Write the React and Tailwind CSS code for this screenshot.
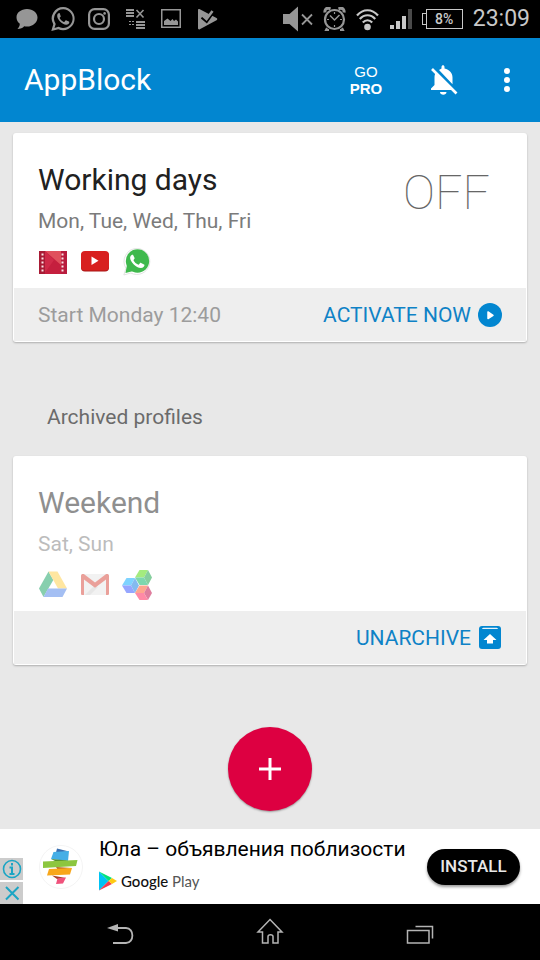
import React from 'react';

const ICON = 'w-[22px] h-[22px] shrink-0';

function StatusBar() {
  return (
    <div className="h-[38px] bg-black flex items-center justify-between pl-4 pr-2.5 text-[#969696]">
      <div className="flex items-center gap-3.5">
        <svg viewBox="0 0 22 22" className={ICON} fill="currentColor" aria-label="Message">
          <path d="M11 1C5 1 .5 4.600.5 9.300c0 2.700 1.300 5 3.300 6.500 0 2-.8 3.700-2.300 5.200 3 0 5.200-1 6.700-2.700.9.200 1.800.3 2.800.3 6 0 10.500-4.300 10.500-9.100S17 1 11 1z" />
        </svg>
        <svg viewBox="0 0 24 24" className="w-[24px] h-[24px] -mx-px shrink-0" fill="currentColor" aria-label="WhatsApp">
          <path fillRule="evenodd" d="M12.300 0A11.500 11.500 0 0 0 2.300 17.300L.3 24l7-1.800A11.600 11.600 0 1 0 12.300 0zm0 2.200a9.400 9.400 0 1 1-4.700 17.600l-4.100 1.100 1.200-4A9.400 9.400 0 0 1 12.300 2.200z" />
          <path d="M8.600 6.100c-.7-.3-2.200.6-2.400 2.300-.4 3.600 5 9.300 9 9.300 1.800 0 3.100-1.200 3.100-2.500 0-.4-.2-.5-.4-.6l-2.500-1.200c-.4-.2-.6-.1-.9.2l-1 1.200c-.2.200-.4.300-.8.100-1.600-.7-3-2-3.900-3.600-.2-.3-.1-.5.1-.7l.9-1.200-1-2.800z" />
        </svg>
        <svg viewBox="0 0 22 22" className={ICON} fill="none" stroke="currentColor" strokeWidth="2.200" aria-label="Instagram">
          <rect x="1.100" y="1.100" width="19.800" height="19.800" rx="5.500" />
          <circle cx="11" cy="11" r="5" />
          <circle cx="16.600" cy="5.400" r="1.300" fill="currentColor" stroke="none" />
        </svg>
        <svg viewBox="0 0 22 22" className={ICON} fill="currentColor" aria-label="Profiles">
          <path d="M2 1h8v2H2zM2 4h8v2H2zM2 7h8v2H2zM12 13h9v2h-9zM12 16h9v2h-9zM12 19h9v2h-9zM5 13h2v1H5zM8 13h2v1H8zM5 16h2v1H5zM8 16h2v1H8z" />
          <path d="M12.500 2l7 7.500M19.500 2l-7 7.500" stroke="currentColor" strokeWidth="1.600" />
        </svg>
        <svg viewBox="0 0 22 22" className={ICON} fill="currentColor" aria-label="Picture">
          <path fillRule="evenodd" d="M1 1h20v19H1zM2.500 2.500v16h17v-16z" />
          <path d="M4 17v-4l3.500-2.500 3 2.500 2-2 1.500 2 2-1.500 2 2v3.500z" />
        </svg>
        <svg viewBox="0 0 22 22" className={ICON} fill="currentColor" aria-label="Play Protect">
          <path d="M2 2c0-1 1-1.300 1.800-.8L20.500 10c1 .6 1 1.600 0 2.200L3.800 21.200C3 21.700 2 21.300 2 20.300z" />
          <path d="M6 9l4.600 3.800L18 2.500" fill="none" stroke="#000" strokeWidth="3.600" />
          <path d="M6.500 7.500l4 3.500L16.500 3" fill="none" stroke="currentColor" strokeWidth="2.600" />
        </svg>
      </div>

      <div className="flex items-center gap-2.5">
        <svg viewBox="0 0 30 26" className="w-[30px] h-[26px]" fill="currentColor" aria-label="Sound off">
          <path d="M0 8h6.500L15 .5v25L6.500 18H0z" />
          <path d="M19 8.500l10 10M29 8.500l-10 10" stroke="currentColor" strokeWidth="1.800" />
        </svg>
        <svg viewBox="0 0 23 24" className="w-[23px] h-[24px]" fill="none" stroke="currentColor" aria-label="Alarm">
          <circle cx="11.500" cy="12.500" r="9.500" strokeWidth="2.200" />
          <path d="M2 5.500C1.500 3 3 1 5.500 1.200L7.500 2M21 5.500C21.500 3 20 1 17.500 1.200L15.500 2" strokeWidth="3" />
          <path d="M4 21l-1 2h3M19 21l1 2h-3" strokeWidth="2" />
          <path d="M7 8.500l4.500 4.500L16.500 8" strokeWidth="1.500" />
          <path d="M11.500 5v2M11.500 18v2M4 12.500h2M17 12.500h2" strokeWidth="1.200" />
        </svg>
        <svg viewBox="0 0 23 24" className="w-[23px] h-[24px] text-[#c8c8c8]" fill="none" stroke="currentColor" strokeWidth="2.200" aria-label="Wi-Fi">
          <path d="M1 8.500C7 1.500 16 1.500 22 8.500M3.800 12c4.500-5 11-5 15.400 0M6.800 15.500c2.800-3 6.600-3 9.400 0" />
          <circle cx="11.500" cy="20" r="3.300" fill="currentColor" stroke="none" />
        </svg>
        <svg viewBox="0 0 23 22" className="w-[23px] h-[22px] text-[#c8c8c8]" fill="currentColor" aria-label="Signal">
          <path d="M1 17h4v4H1zM7 13h4v8H7zM13 8h4v13h-4z" />
          <path d="M19 1h4v20h-4z" fill="#4a4a4a" />
        </svg>
        <div className="flex items-center text-[#c8c8c8]" aria-label="Battery 8%">
          <span className="w-[4px] h-[12px] border border-r-0 border-current" />
          <span className="w-[37px] h-[20px] border border-current text-[14px] leading-[18px] font-medium text-center">8%</span>
        </div>
        <span className="text-[23px] leading-[38px] text-[#c8c8c8]">23:09</span>
      </div>
    </div>
  );
}

function Header() {
  return (
    <header className="h-[84px] bg-[#0286d0] text-white flex items-center pl-6 pr-5">
      <h1 className="flex-1 text-[30px] leading-9">AppBlock</h1>
      <button className="w-[56px] font-['Liberation_Sans',sans-serif] text-[15px] leading-[17px] text-center">
        GO
        <span className="block font-bold">PRO</span>
      </button>
      <button className="ml-8 w-[36px] flex justify-center" aria-label="Mute notifications">
        <svg viewBox="0 0 28 32" className="w-[28px] h-[32px]" fill="currentColor">
          <path d="M6 8.500L21 24.500l2 1.500H1v-1.500L4.500 21v-7.500c0-2 .4-3.600 1.500-5zM9 6l2.500-1.500V3c0-2.500 3-2.500 3 0v1.500c5 1.200 8 4.500 8 9v6.800z" />
          <path d="M10 28h6.500c0 3.600-6.500 3.600-6.500 0z" />
          <path d="M2 5l24.500 24.500" stroke="currentColor" strokeWidth="2.600" />
        </svg>
      </button>
      <button className="ml-8 w-[26px] flex justify-center" aria-label="More options">
        <svg viewBox="0 0 6 26" className="w-[6px] h-[26px]" fill="currentColor">
          <circle cx="3" cy="4" r="3" />
          <circle cx="3" cy="13" r="3" />
          <circle cx="3" cy="22" r="3" />
        </svg>
      </button>
    </header>
  );
}

function MoviesIcon() {
  return (
    <svg viewBox="0 0 30 30" className="w-[30px] h-[30px]" aria-label="Play Movies">
      <path fill="#c51f3e" d="M1 4h28v23H1z" />
      <path fill="#e0505c" d="M7 4h16v14z" />
      <path fill="#d02a48" d="M7 4l9 9L6 27V4z" />
      <path fill="#a81b35" d="M1 4h6v23H1z" />
      <path fill="#b81c3e" d="M23 4h6v23h-6z" />
      <path d="M4.500 6.500v19M24.500 6.500v19" stroke="#fbe3e6" strokeWidth="2" strokeDasharray="2 2" />
    </svg>
  );
}

function YouTubeIcon() {
  return (
    <svg viewBox="0 0 30 30" className="w-[30px] h-[30px]" aria-label="YouTube">
      <rect x="1" y="5" width="28" height="19.500" rx="4" fill="#a81616" />
      <rect x="1" y="4" width="28" height="19.500" rx="4" fill="#d8201f" />
      <path fill="#fff" d="M11.500 9.500v8.500l7-4.200z" />
    </svg>
  );
}

function WhatsAppIcon() {
  return (
    <svg viewBox="0 0 30 30" className="w-[30px] h-[30px]" aria-label="WhatsApp">
      <path fill="#fff" stroke="#dcdcdc" strokeWidth=".8" d="M15.500 1.500A13 13 0 0 0 4 21.300L1.800 28l7-2A13 13 0 1 0 15.500 1.500z" />
      <circle cx="15.500" cy="14" r="11.700" fill="#3fb94d" />
      <path fill="#3fb94d" d="M5 18l-1.500 8 8-2z" />
      <path fill="#fff" d="M11 7.800c-1-.4-2.800 1-2.900 2.800-.3 4 6 10.500 10.800 10.500 2.200 0 3.600-1.500 3.600-3 0-.4-.2-.6-.5-.7l-2.900-1.500c-.4-.2-.7-.1-1 .2l-1.200 1.400c-.2.300-.5.300-.9.100-1.900-.8-3.400-2.300-4.400-4.100-.2-.4-.1-.6.1-.8l1-1.400z" />
    </svg>
  );
}

function DriveIcon() {
  return (
    <svg viewBox="0 0 30 30" className="w-[30px] h-[30px]" aria-label="Google Drive">
      <path fill="#11a05f" d="M10.500 1.500L1 18.500 5.500 27l9.800-17z" />
      <path fill="#ffce44" d="M10.500 1.500h9L29 18.500h-9z" />
      <path fill="#4b80e8" d="M10 18.500h19L24.500 27h-19z" />
    </svg>
  );
}

function GmailIcon() {
  return (
    <svg viewBox="0 0 30 30" className="w-[30px] h-[30px]" aria-label="Gmail">
      <rect x="1" y="4" width="28" height="21" rx="2" fill="#e6e6e6" />
      <path fill="#d0d0d0" d="M5 25l10-10 3 2-8 8z" />
      <path fill="#d74437" d="M1 6c0-2 2-2.500 3.500-1.500L15 12.500l10.500-8C27 3.500 29 4 29 6v17.500c0 1-.6 1.500-1.500 1.500H26V9.500l-11 8.300L4 9.500V25H2.500C1.600 25 1 24.500 1 23.500z" />
    </svg>
  );
}

function CubesIcon() {
  return (
    <svg viewBox="0 0 30 30" className="w-[30px] h-[30px]" aria-label="Cubes">
      <path fill="#4cd800" d="M17.500 0h8.500l-4 7.500h-9z" />
      <path fill="#10a040" d="M26 0l4 7.500-4 7.500-4-7.500z" />
      <path fill="#00b060" d="M13 7.500h9l4 7.500h-8.500z" />
      <path fill="#00a8ff" d="M4.500 8H13l-4 7.500H0z" />
      <path fill="#0a78e0" d="M13 8l4 7.500-4 7.500-4-7.500z" />
      <path fill="#3050ff" d="M0 15.500h9l4 7.500H4.500z" />
      <path fill="#ff5020" d="M17.500 15.500H26L22 23h-9z" />
      <path fill="#c00040" d="M26 15.500l4 7.500-4 7-4-7z" />
      <path fill="#ff1850" d="M13 23h9l4 7h-8.500z" />
    </svg>
  );
}

function PlayCircleIcon() {
  return (
    <svg viewBox="0 0 24 24" className="w-[24px] h-[24px]">
      <circle cx="12" cy="12" r="12" fill="#0286d0" />
      <path d="M10 9v6.500l5-3.200z" fill="#fff" stroke="#fff" strokeWidth="1.500" strokeLinejoin="round" />
    </svg>
  );
}

function UnarchiveIcon() {
  return (
    <svg viewBox="0 0 24 24" className="w-[24px] h-[24px]">
      <rect x="1" y="0" width="22" height="23" rx="3" fill="#0286d0" />
      <path d="M4 3c.5-1.200 1-1.300 2-1.300h12c1 0 1.500.1 2 1.300z" fill="#e6f2fa" />
      <path d="M12 8l6.500 6H15v3.500H9V14H5.500z" fill="#fff" />
    </svg>
  );
}

function ProfileCard({ title, days, icons, archived, state, footer, action, actionIcon }) {
  return (
    <section className="bg-white rounded-[3px] p-px shadow-[0_1px_2px_rgba(0,0,0,0.25)]">
      <div className="flex justify-between pl-6 pr-9 pt-[27px] pb-[11px]">
        <div className={archived ? 'opacity-50' : ''}>
          <h2 className="text-[30px] leading-[38px] text-[#212121]">{title}</h2>
          <p className="mt-2 text-[21px] leading-7 text-[#7b7b7b]">{days}</p>
          <div className="mt-3 flex gap-3">{icons}</div>
        </div>
        {state && <span className="mt-1 text-[48px] leading-[56px] font-thin text-[#666]">{state}</span>}
      </div>
      <div className="h-[53px] bg-[#eee] flex items-center justify-between px-6 text-[21px]">
        <span className="pt-0.5 text-[#9c9c9c]">{footer}</span>
        <button className="flex items-center gap-[7px] text-[#0f82c6]">
          <span className="pt-0.5">{action}</span>
          {actionIcon}
        </button>
      </div>
    </section>
  );
}

function AdBanner() {
  return (
    <div className="h-[75px] bg-white flex items-center pr-5">
      <div className="self-end w-[23px] flex flex-col gap-0.5">
        <button className="h-[22px] bg-[#ccc] flex items-center justify-center" aria-label="Ad info">
          <svg viewBox="0 0 20 20" className="w-[20px] h-[20px]" fill="none" stroke="#1ba5c4">
            <circle cx="10" cy="10" r="8.500" strokeWidth="1.600" />
            <path d="M10 4v2.500M7.500 8.500H10V15M7.500 15h5" strokeWidth="2" />
          </svg>
        </button>
        <button className="h-[22px] bg-[#ccc] flex items-center justify-center" aria-label="Close ad">
          <svg viewBox="0 0 20 20" className="w-[20px] h-[20px]" stroke="#1ba5c4" strokeWidth="2">
            <path d="M4 4l12.500 12.500M16.500 4L4 16.500" />
          </svg>
        </button>
      </div>
      <svg viewBox="0 0 44 44" className="ml-4 w-[44px] h-[44px] shrink-0" aria-label="Юла">
        <circle cx="22" cy="22" r="21.500" fill="#fff" stroke="#f4f4f4" />
        <path fill="#3a6fb0" d="M18 3.500l12 3-13 1z" />
        <path fill="#45aee6" d="M14.500 7L30 6l-1 10-17-2z" />
        <path fill="#4f8a2c" d="M12 14l17 1.500-10 2z" />
        <path fill="#8cc63f" d="M4 16.500L38.500 15 37 21 4 23z" />
        <path fill="#b5651d" d="M17 22l16 1-14 2z" />
        <path fill="#f8a71b" d="M10 24l23-1-2 6.500L8 30.500z" />
        <path fill="#a8402a" d="M13 30.500L27 33l-9 1z" />
        <path fill="#f0527c" d="M18.500 33.500L27 32.500l-3 6-7 .5z" />
      </svg>
      <div className="ml-4 flex-1 min-w-0 pb-2">
        <p className="text-[21px] leading-7 whitespace-nowrap text-black">Юла – объявления поблизости</p>
        <div className="mt-2 flex items-center gap-1">
          <svg viewBox="0 0 18 20" className="w-[18px] h-[20px]" aria-hidden="true">
            <path fill="#00c3f5" d="M0 .5L9.500 10 0 19.500z" />
            <path fill="#00e27a" d="M0 .5l13 6.500-3.500 3z" />
            <path fill="#f33b50" d="M0 19.500L13 13l-3.500-3z" />
            <path fill="#ffca12" d="M13 7l5 3-5 3-3.500-3z" />
          </svg>
          <span className="font-['Lato',sans-serif] text-[15px] leading-5 text-[#555]">
            <span className="font-medium text-[#111]">Google</span> Play
          </span>
        </div>
      </div>
      <button className="w-[93px] h-[36px] rounded-full bg-black text-[#e8e8e8] text-[17px] font-medium shadow-[0_2px_3px_rgba(0,0,0,0.4)]">
        INSTALL
      </button>
    </div>
  );
}

function NavBar() {
  return (
    <nav className="h-[56px] bg-black flex items-center justify-center gap-[120px] text-[#b4b4b4]">
      <button aria-label="Back">
        <svg viewBox="0 0 30 28" className="w-[30px] h-[28px]" fill="none" stroke="currentColor" strokeWidth="1.800">
          <path d="M9 10h12c8.500 0 8.500 15 0 15H8" />
          <path d="M2 10l11-4v7.500z" fill="currentColor" stroke="none" />
        </svg>
      </button>
      <button aria-label="Home">
        <svg viewBox="0 0 30 28" className="w-[30px] h-[28px]" fill="none" stroke="currentColor" strokeWidth="1.500">
          <path d="M15 1.500L27 14h-4v11h-5V18.500c0-2.500-5-2.500-5 0V25H7.500V14H3z" />
        </svg>
      </button>
      <button aria-label="Recent apps">
        <svg viewBox="0 0 30 28" className="w-[30px] h-[28px]" fill="none" stroke="currentColor" strokeWidth="1.500">
          <path d="M2.500 12.500h21.500V25H2.500zM10.500 8.500h17V20.500" />
        </svg>
      </button>
    </nav>
  );
}

export default function App() {
  return (
    <div className="min-h-screen flex flex-col bg-[#e8e8e8] font-['Roboto',sans-serif]">
      <StatusBar />
      <Header />

      <main className="flex-1 flex flex-col px-[13px] pt-[11px] pb-[18px]">
        <ProfileCard
          title="Working days"
          days="Mon, Tue, Wed, Thu, Fri"
          icons={<><MoviesIcon /><YouTubeIcon /><WhatsAppIcon /></>}
          state="OFF"
          footer="Start Monday 12:40"
          action="ACTIVATE NOW"
          actionIcon={<PlayCircleIcon />}
        />

        <h3 className="pl-[34px] pt-[61px] pb-[25px] text-[21px] leading-7 text-[#6b6b6b]">Archived profiles</h3>

        <ProfileCard
          archived
          title="Weekend"
          days="Sat, Sun"
          icons={<><DriveIcon /><GmailIcon /><CubesIcon /></>}
          action="UNARCHIVE"
          actionIcon={<UnarchiveIcon />}
        />

        <button
          className="mt-auto self-center w-[84px] h-[84px] rounded-full bg-[#dd0041] flex items-center justify-center shadow-[0_1px_2px_rgba(0,0,0,0.35)]"
          aria-label="Add profile"
        >
          <svg viewBox="0 0 22 22" className="w-[22px] h-[22px]" stroke="#fff" strokeWidth="3">
            <path d="M11 0v22M0 11h22" />
          </svg>
        </button>
      </main>

      <AdBanner />
      <NavBar />
    </div>
  );
}
